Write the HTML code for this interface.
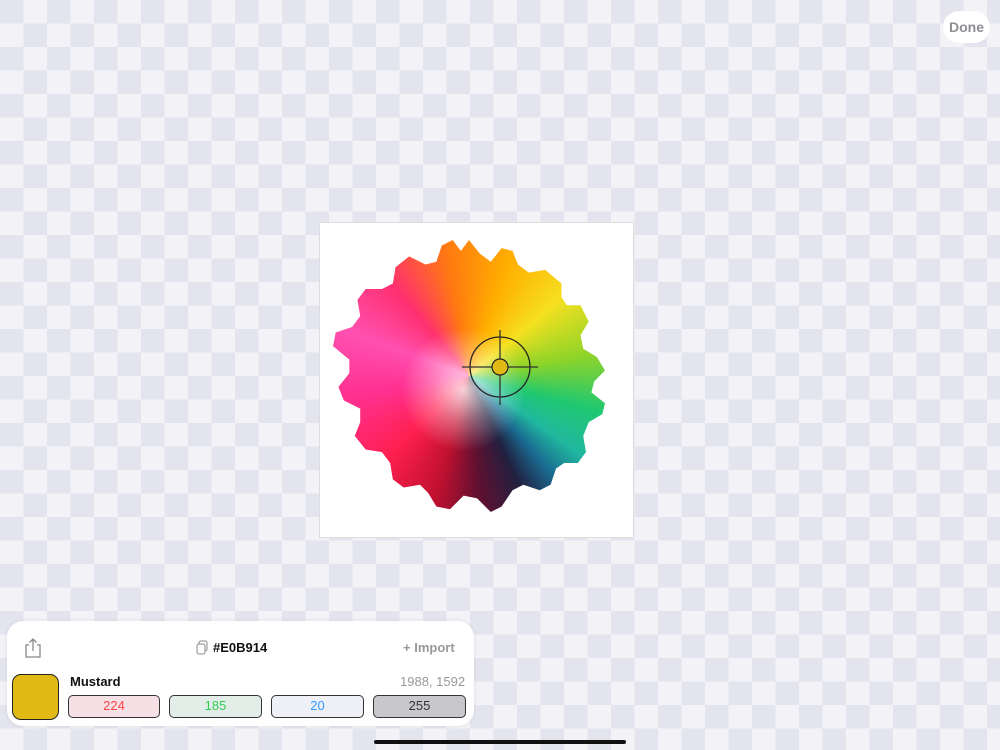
<!DOCTYPE html>
<html><head><meta charset="utf-8"><style>
*{margin:0;padding:0;box-sizing:border-box}
body{width:1000px;height:750px;overflow:hidden;position:relative;font-family:"Liberation Sans",sans-serif;
background-color:#f2f2f7;
background-image:conic-gradient(#e4e4ee 25%,transparent 0 50%,#e4e4ee 0 75%,transparent 0);
background-size:47px 47px;background-position:23.5px 0}
.done{position:absolute;left:943px;top:11px;width:47px;height:32px;border-radius:16px;background:#fff;color:#8e8e93;font-size:14px;font-weight:bold;text-align:center;line-height:32px}
.img{position:absolute;left:319px;top:222px;width:315px;height:316px;background:#fff;border:1px solid #ddd}
.fl{position:absolute;left:333px;top:240px;width:272px;height:272px;
background:conic-gradient(from -10deg at 50% 50%,#ff7a10,#ffb000 30deg,#f5e020 60deg,#8fd428 90deg,#20c870 115deg,#20b8a0 135deg,#1a6a90 150deg,#202040 165deg,#601030 185deg,#c01030 205deg,#ff2050 235deg,#ff3090 270deg,#ff50b0 300deg,#ff3070 330deg,#ff7a10 360deg);
clip-path:polygon(50% 0%,54% 5%,58% 8%,62% 3%,66% 4%,68% 9%,72% 12%,78% 11%,84% 16%,84% 21%,86% 24%,91% 24%,94% 30%,91% 35%,92% 40%,97% 43%,100% 48%,96% 52%,95% 56%,100% 60%,99% 64%,94% 67%,92% 72%,93% 78%,90% 82%,85% 82%,82% 84%,80% 90%,76% 92%,70% 90%,66% 92%,62% 98%,58% 100%,53% 95%,48% 94%,43% 99%,38% 98%,35% 93%,32% 90%,26% 91%,22% 88%,21% 82%,18% 78%,12% 77%,8% 72%,10% 67%,10% 62%,4% 59%,2% 54%,6% 49%,6% 44%,0% 39%,1% 34%,7% 32%,10% 28%,9% 22%,12% 18%,18% 18%,22% 16%,23% 10%,28% 6%,34% 9%,38% 8%,40% 2%,44% 0%,47% 4%)}
.wc{position:absolute;left:333px;top:240px;width:272px;height:272px;background:radial-gradient(circle at 48% 55%,rgba(255,255,255,.8) 0,rgba(255,255,255,.35) 15%,rgba(255,255,255,0) 30%)}
.panel{position:absolute;left:7px;top:621px;width:467px;height:105px;background:#fff;border-radius:16px;box-shadow:0 0 4px rgba(0,0,0,.08)}
.sw{position:absolute;left:12px;top:674px;width:47px;height:46px;border-radius:9px;background:#e0b914;border:1.5px solid #222}
.b{position:absolute;top:695px;height:23px;border:1.5px solid #333;border-radius:5px;text-align:center;font-size:13px;line-height:20px}
.t{position:absolute;font-size:13px}
</style></head><body>
<div class="done">Done</div>
<div class="img"></div>
<div class="fl"></div><div class="wc"></div>
<svg style="position:absolute;left:0;top:0" width="1000" height="750">
<circle cx="500" cy="367" r="30" fill="none" stroke="#222" stroke-width="1.3"/>
<line x1="462" y1="367" x2="538" y2="367" stroke="#333" stroke-width="1.3"/>
<line x1="500" y1="330" x2="500" y2="405" stroke="#333" stroke-width="1.3"/>
<circle cx="500" cy="367" r="8" fill="#e0b914" stroke="#222" stroke-width="1.2"/>
</svg>
<div class="panel"></div>
<svg style="position:absolute;left:24px;top:637px" width="18" height="22"><path d="M5 8H2v12h14V8h-3M9 14V2M5.5 5.5 9 2l3.5 3.5" fill="none" stroke="#888" stroke-width="1.3"/></svg>
<svg style="position:absolute;left:196px;top:640px" width="13" height="15"><rect x="3" y="1" width="8" height="10" rx="2" fill="none" stroke="#888"/><rect x="1" y="4" width="8" height="10" rx="2" fill="#fff" stroke="#888"/></svg>
<div class="t" style="left:213px;top:640px;font-weight:bold;color:#111">#E0B914</div>
<div class="t" style="left:403px;top:640px;color:#999;font-weight:bold">+ Import</div>
<div class="t" style="left:70px;top:674px;font-weight:bold;color:#111">Mustard</div>
<div class="t" style="left:400px;top:674px;color:#999">1988, 1592</div>
<div class="sw"></div>
<div class="b" style="left:68px;width:92px;background:#f5e1e5;color:#f44">224</div>
<div class="b" style="left:169px;width:93px;background:#e2ede8;color:#3c5">185</div>
<div class="b" style="left:271px;width:93px;background:#eff0f7;color:#39f">20</div>
<div class="b" style="left:373px;width:93px;background:#c8c8cc;color:#333">255</div>
<div style="position:absolute;left:374px;top:740px;width:252px;height:4px;border-radius:2px;background:#111"></div>
</body></html>
